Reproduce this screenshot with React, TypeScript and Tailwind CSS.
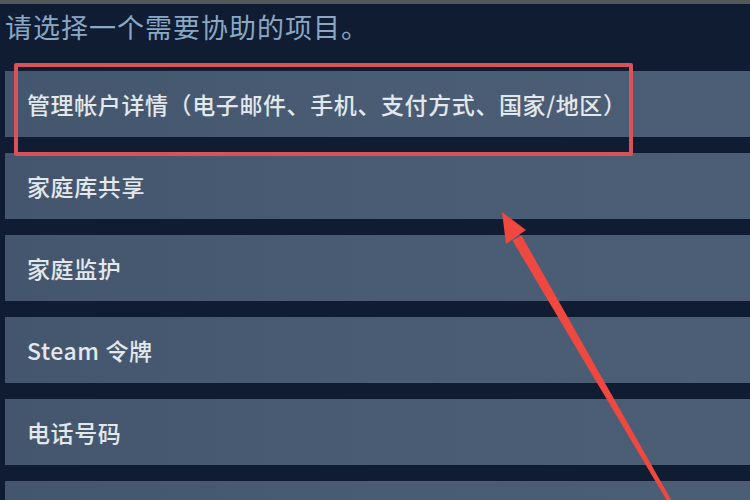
import React from "react";

const rows = [
  "管理帐户详情（电子邮件、手机、支付方式、国家/地区）",
  "家庭库共享",
  "家庭监护",
  "Steam 令牌",
  "电话号码",
  "",
];

export default function App() {
  return (
    <div
      className="relative w-[750px] h-[500px] overflow-hidden bg-[#0f1c31]"
      style={{ fontFamily: '"Noto Sans CJK SC", "Noto Sans", sans-serif' }}
    >
      <div className="h-[4px] bg-[#54575b]" />
      <div className="h-[44px] flex items-center pl-[5px] text-[27px] leading-none text-[#8aa7c4] tracking-[1px]">
        请选择一个需要协助的项目。
      </div>
      <div className="pt-[23px] flex flex-col gap-[16px] pl-[5px]">
        {rows.map((r, i) => (
          <div
            key={i}
            className="h-[66px] flex items-center pl-[22px] bg-gradient-to-r from-[#44566d] via-[#495c73] to-[#4b5e75] text-[23px] leading-none font-medium tracking-[0.6px] text-[#e3e8ed]"
          >
            {r}
          </div>
        ))}
      </div>

      {/* red highlight box */}
      <div className="absolute left-[14px] top-[63px] w-[619px] h-[93px] border-[4px] border-[#d9525a] rounded-[2px]" />

      {/* red arrow */}
      <svg
        className="absolute inset-0 pointer-events-none"
        width="750"
        height="500"
        viewBox="0 0 750 500"
      >
        <polygon points="502,212 526,230 506,244" fill="#ef4841" />
        <polygon points="521.5,235.5 512.5,240.5 679,521 682,519" fill="#ef4841" />
      </svg>
    </div>
  );
}
